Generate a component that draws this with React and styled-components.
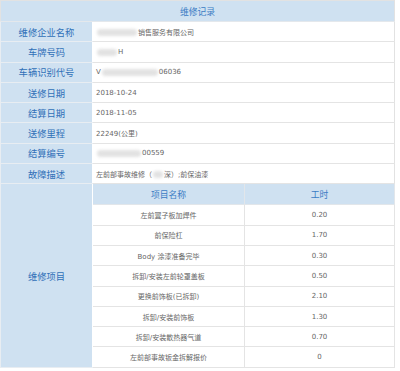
import React from "react";
import styled, { createGlobalStyle } from "styled-components";

const GlobalStyle = createGlobalStyle`
  body {
    margin: 0;
    background: #fff;
    font-family: "DejaVu Sans", "Noto Sans CJK SC", sans-serif;
  }
`;

// record rows (built at render, after the styled parts exist)
const getInfoRows = () => [
  { label: "维修企业名称", value: <><Blur $w={40} />销售服务有限公司</> },
  { label: "车牌号码", value: <><Blur $w={20} />H</> },
  { label: "车辆识别代号", value: <>V<Blur $w={56} />06036</> },
  { label: "送修日期", value: "2018-10-24" },
  { label: "结算日期", value: "2018-11-05" },
  { label: "送修里程", value: "22249(公里)" },
  { label: "结算编号", value: <><Blur $w={44} />00559</> },
  { label: "故障描述", value: <>左前部事故维修（<Blur $w={10} />深）;前保油漆</> },
];

const items = [
  { name: "左前翼子板加焊件", hours: "0.20" },
  { name: "前保险杠", hours: "1.70" },
  { name: "Body 涂漆准备完毕", hours: "0.30" },
  { name: "拆卸/安装左前轮罩盖板", hours: "0.50" },
  { name: "更换前饰板(已拆卸)", hours: "2.10" },
  { name: "拆卸/安装前饰板", hours: "1.30" },
  { name: "拆卸/安装散热器气道", hours: "0.70" },
  { name: "左前部事故钣金拆解报价", hours: "0" },
];

function App() {
  const infoRows = getInfoRows();
  return (
    <>
      <GlobalStyle />
      <RecordTable>
        <colgroup>
          <col style={{ width: 92 }} />
          <col style={{ width: 152 }} />
          <col style={{ width: 150 }} />
        </colgroup>
        <tbody>
          <HeadRow>
            <TitleCell colSpan={3}>维修记录</TitleCell>
          </HeadRow>
          {infoRows.map((row) => (
            <Row key={row.label}>
              <LabelCell>{row.label}</LabelCell>
              <ValueCell colSpan={2}>{row.value}</ValueCell>
            </Row>
          ))}
          <HeadRow>
            <LabelCell rowSpan={items.length + 1}>维修项目</LabelCell>
            <ItemHead>项目名称</ItemHead>
            <ItemHead>工时</ItemHead>
          </HeadRow>
          {items.map((item) => (
            <Row key={item.name}>
              <ItemCell>{item.name}</ItemCell>
              <ItemCell>{item.hours}</ItemCell>
            </Row>
          ))}
        </tbody>
      </RecordTable>
    </>
  );
}

const RecordTable = styled.table`
  width: 394px;
  table-layout: fixed;
  border-collapse: collapse;
  border: 1px solid #e2e2e2;
`;

const HeadRow = styled.tr`
  height: 21px;
`;

const Row = styled.tr`
  height: 20.3px;
`;

const TitleCell = styled.td`
  padding: 0;
  background: #cfe1f1;
  color: #3b7cc4;
  font-size: 8.8px;
  text-align: center;
  border-bottom: 1px solid #e4e8ec;
`;

const LabelCell = styled.td`
  padding: 0;
  background: #cfe1f1;
  color: #2f70b8;
  font-size: 9.3px;
  text-align: center;
  border: 1px solid #e8edf2;
  border-right: 1px solid #fff;
`;

const ValueCell = styled.td`
  padding: 0 0 0 3px;
  color: #666;
  font-size: 7px;
  white-space: nowrap;
  border-bottom: 1px solid #e4e4e4;
`;

const ItemHead = styled.td`
  padding: 0;
  background: #cfe1f1;
  color: #3b7cc4;
  font-size: 8.8px;
  text-align: center;
  border: 1px solid #e2e6ea;
`;

const ItemCell = styled.td`
  padding: 0;
  color: #666;
  font-size: 7px;
  text-align: center;
  white-space: nowrap;
  border: 1px solid #e4e4e4;
`;

const Blur = styled.span`
  display: inline-block;
  width: ${(p) => p.$w}px;
  height: 7px;
  margin: 0 1px;
  vertical-align: middle;
  border-radius: 4px;
  background: #e2e2e2;
  filter: blur(1.5px);
`;

export default App;
